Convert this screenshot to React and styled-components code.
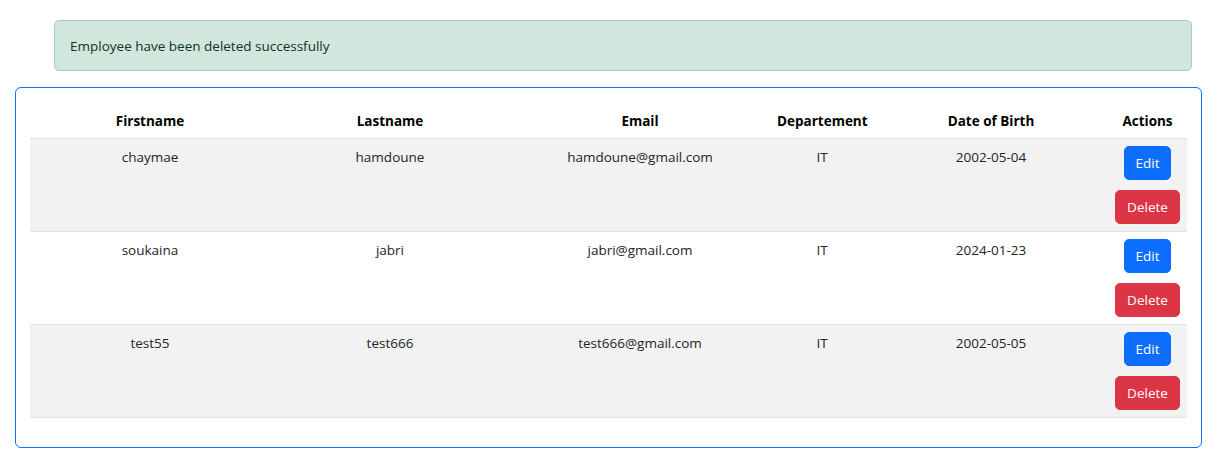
import React from "react";
import styled, { createGlobalStyle } from "styled-components";

const Global = createGlobalStyle`
  html, body { margin: 0; padding: 0; background: #fff; }
  body {
    font-family: "Open Sans", "Noto Sans", "Liberation Sans", sans-serif;
    font-size: 13.5px;
    line-height: 21px;
    color: #212529;
  }
  * { box-sizing: border-box; }
`;

const Page = styled.div`
  padding: 20px 22px 0 15px;
`;

const Alert = styled.div`
  margin: 0 10px 16px 39px;
  padding: 15px 15px 13px;
  background: #d1e7dd;
  border: 1px solid #a3cfbb;
  border-radius: 5px;
  color: #0a3622;
`;

const Card = styled.div`
  border: 1px solid #0d6efd;
  border-radius: 6px;
  padding: 14px 14px 15px;
`;

const Table = styled.table`
  width: 100%;
  border-collapse: collapse;
  table-layout: fixed;
  margin-bottom: 14px;
`;

const Th = styled.th`
  padding: 9px 7px 6px;
  text-align: center;
  font-weight: 700;
  color: #000;
  border-bottom: 1px solid #dee2e6;
`;

const Row = styled.tr`
  background: ${(p) => (p.$striped ? "#f2f2f2" : "#fff")};
  border-bottom: 1px solid #dee2e6;
`;

const Td = styled.td`
  padding: ${(p) => (p.$actions ? "7px" : "8px 7px 6px")};
  text-align: center;
  vertical-align: top;
`;

const Actions = styled.div`
  display: flex;
  flex-direction: column;
  align-items: center;
  gap: 10px;
`;

const Button = styled.button`
  font-family: inherit;
  font-size: 13.5px;
  line-height: 21px;
  height: 34px;
  padding: 0 11px;
  border-radius: 5px;
  border: 1px solid ${(p) => (p.$variant === "danger" ? "#dc3545" : "#0d6efd")};
  background: ${(p) => (p.$variant === "danger" ? "#dc3545" : "#0d6efd")};
  color: #fff;
  cursor: pointer;
`;

const employees = [
  { first: "chaymae", last: "hamdoune", email: "hamdoune@gmail.com", dep: "IT", dob: "2002-05-04" },
  { first: "soukaina", last: "jabri", email: "jabri@gmail.com", dep: "IT", dob: "2024-01-23" },
  { first: "test55", last: "test666", email: "test666@gmail.com", dep: "IT", dob: "2002-05-05" },
];

const widths = [240, 240, 260, 104, 234, 79];

export default function App() {
  return (
    <>
      <Global />
      <Page>
        <Alert>Employee have been deleted successfully</Alert>
        <Card>
          <Table>
            <colgroup>
              {widths.map((w, i) => (
                <col key={i} style={{ width: w }} />
              ))}
            </colgroup>
            <thead>
              <tr>
                <Th>Firstname</Th>
                <Th>Lastname</Th>
                <Th>Email</Th>
                <Th>Departement</Th>
                <Th>Date of Birth</Th>
                <Th>Actions</Th>
              </tr>
            </thead>
            <tbody>
              {employees.map((e, i) => (
                <Row key={i} $striped={i % 2 === 0}>
                  <Td>{e.first}</Td>
                  <Td>{e.last}</Td>
                  <Td>{e.email}</Td>
                  <Td>{e.dep}</Td>
                  <Td>{e.dob}</Td>
                  <Td $actions>
                    <Actions>
                      <Button>Edit</Button>
                      <Button $variant="danger">Delete</Button>
                    </Actions>
                  </Td>
                </Row>
              ))}
            </tbody>
          </Table>
        </Card>
      </Page>
    </>
  );
}
